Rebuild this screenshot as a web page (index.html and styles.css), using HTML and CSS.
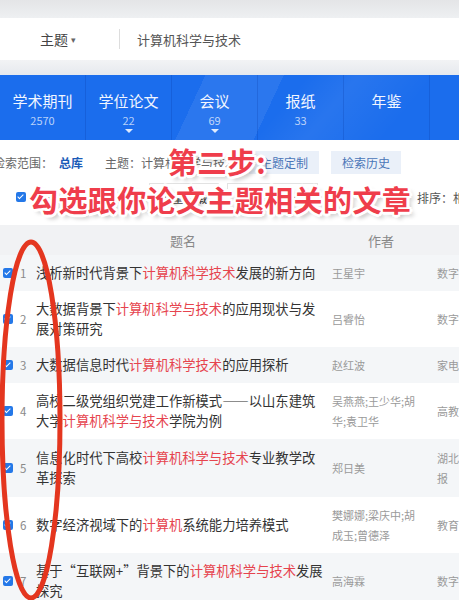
FILE: index.html
```html
<!DOCTYPE html>
<html lang="zh-CN">
  <head>
    <meta charset="UTF-8">
    <meta name="viewport" content="width=device-width, initial-scale=1.0">
    <title>计算机科学与技术 - 检索结果</title>
    <link rel="stylesheet" href="styles.css">
  </head>
  <body>

    <div class="top-strip"></div>

    <div class="search-bar">
      <div class="search-field">主题 <span class="caret">▾</span></div>
      <div class="search-divider"></div>
      <div class="search-query">计算机科学与技术</div>
    </div>

    <div class="strip-gap"></div>

    <div class="db-tabs">
      <div class="db-tab">
        <div class="db-name">学术期刊</div>
        <div class="db-count">2570</div>
      </div>
      <div class="db-tab">
        <div class="db-name">学位论文</div>
        <div class="db-count more">22</div>
      </div>
      <div class="db-tab active">
        <div class="db-name">会议</div>
        <div class="db-count more">69</div>
      </div>
      <div class="db-tab">
        <div class="db-name">报纸</div>
        <div class="db-count">33</div>
      </div>
      <div class="db-tab">
        <div class="db-name">年鉴</div>
        <div class="db-count">&nbsp;</div>
      </div>
      <div class="db-tab"></div>
    </div>

    <div class="filters">
      <div class="filter-row">
        <span class="scope-label">检索范围：</span>
        <span class="scope-value">总库</span>
        <span class="scope-label">主题：计算机科学与技术</span>
        <span class="pill">主题定制</span>
        <span class="pill">检索历史</span>
      </div>
      <div class="filter-row tools">
        <span class="chk"></span>
        <span class="tool-text">全选</span>
        <span class="tool-text">已选 12</span>
        <span class="tool-text">清除</span>
        <span class="tool-btn">批量下载</span>
        <span class="tool-btn">导出与分析 ▾</span>
        <span class="sort">排序：相关度</span>
      </div>
    </div>

    <div class="results">
      <div class="results-head">
        <div class="col-title">题名</div>
        <div class="col-author">作者</div>
      </div>

      <div class="result odd">
        <span class="chk"></span><span class="num">1</span>
        <div class="title">浅析新时代背景下<em>计算机科学技术</em>发展的新方向</div>
        <div class="author">王星宇</div>
        <div class="source">数字技术与应用</div>
      </div>
      <div class="result">
        <span class="chk"></span><span class="num">2</span>
        <div class="title">大数据背景下<em>计算机科学与技术</em>的应用现状与发展对策研究</div>
        <div class="author">吕睿怡</div>
        <div class="source">数字技术与应用</div>
      </div>
      <div class="result odd">
        <span class="chk"></span><span class="num">3</span>
        <div class="title">大数据信息时代<em>计算机科学技术</em>的应用探析</div>
        <div class="author">赵红波</div>
        <div class="source">家电维修</div>
      </div>
      <div class="result">
        <span class="chk"></span><span class="num">4</span>
        <div class="title">高校二级党组织党建工作新模式——以山东建筑大学<em>计算机科学与技术</em>学院为例</div>
        <div class="author">吴燕燕;王少华;胡华;袁卫华</div>
        <div class="source">高教学刊</div>
      </div>
      <div class="result odd tall">
        <span class="chk"></span><span class="num">5</span>
        <div class="title">信息化时代下高校<em>计算机科学与技术</em>专业教学改革探索</div>
        <div class="author">郑日美</div>
        <div class="source">湖北<br>报</div>
      </div>
      <div class="result">
        <span class="chk"></span><span class="num">6</span>
        <div class="title">数字经济视域下的<em>计算机</em>系统能力培养模式</div>
        <div class="author">樊娜娜;梁庆中;胡成玉;曾德泽</div>
        <div class="source">教育</div>
      </div>
      <div class="result odd">
        <span class="chk"></span><span class="num">7</span>
        <div class="title">基于“互联网+”背景下的<em>计算机科学与技术</em>发展探究</div>
        <div class="author">高海霖</div>
        <div class="source">数字</div>
      </div>
    </div>

    <!-- caption and marker drawn on top of the list -->
    <div class="caption">
      <div class="caption-step">第二步:</div>
      <div class="caption-line">勾选跟你论文主题相关的文章</div>
    </div>

    <svg class="marker" width="80" height="370" viewBox="0 0 80 370">
      <ellipse cx="31" cy="182" rx="29" ry="178" fill="none" stroke="#e4361f" stroke-width="5"/>
    </svg>

  </body>
</html>
```

FILE: styles.css
```css
html, body {
  margin: 0;
  padding: 0;
  box-sizing: border-box;
}
*, *:before, *:after {
  box-sizing: inherit;
}
body {
  position: relative;
  width: 459px;
  height: 600px;
  overflow: hidden;
  font-family: "Noto Sans CJK SC", "Noto Sans", sans-serif;
  color: #333;
  background-color: #fff;
}

/* search box */
.top-strip {
  height: 18px;
  background: linear-gradient(#e4e5e7, #eef0f2);
}
.search-bar {
  display: flex;
  align-items: center;
  height: 42px;
  background-color: #fff;
}
.search-field {
  width: 119px;
  padding-left: 40px;
  font-size: 14px;
  color: #444;
}
.caret {
  font-size: 9px;
  color: #666;
  vertical-align: 2px;
}
.search-divider {
  width: 1px;
  height: 20px;
  background-color: #ddd;
}
.search-query {
  padding-left: 17px;
  font-size: 13px;
  color: #555;
}
.strip-gap {
  height: 15px;
  background: linear-gradient(#f2f3f5, #e6e9ee);
}

/* database tabs */
.db-tabs {
  display: flex;
  height: 65px;
  background-color: #1b6ded;
  background-image:
    linear-gradient(115deg, rgba(255,255,255,0) 42%, rgba(255,255,255,0.07) 42%, rgba(255,255,255,0.07) 58%, rgba(255,255,255,0) 58%),
    linear-gradient(130deg, rgba(0,0,0,0) 60%, rgba(255,255,255,0.06) 70%, rgba(0,0,0,0) 85%);
}
.db-tab {
  position: relative;
  flex: 0 0 86px;
  display: flex;
  flex-direction: column;
  align-items: center;
  padding-top: 15px;
  border-right: 1px solid rgba(0,40,140,0.18);
}
.db-tab:last-child {
  flex: 1;
  border-right: none;
}
.db-name {
  font-size: 15px;
  line-height: 22px;
  color: #f2f6ff;
}
.db-count {
  font-size: 11px;
  line-height: 16px;
  color: rgba(255,255,255,0.7);
}
.db-count.more:after {
  content: '';
  position: absolute;
  left: 50%;
  bottom: 7px;
  margin-left: -4px;
  border: 4px solid transparent;
  border-top: 4px solid rgba(255,255,255,0.85);
  border-bottom: none;
}

/* filter rows */
.filters {
  padding-top: 8px;
  height: 85px;
}
.filter-row {
  display: flex;
  align-items: center;
  height: 28px;
  font-size: 12px;
  color: #666;
  white-space: nowrap;
}
.scope-label:first-child {
  margin-left: -7px;
}
.scope-value {
  margin: 0 22px 0 6px;
  color: #1b5cb8;
  font-weight: bold;
}
.pill {
  margin-left: 12px;
  padding: 3px 11px;
  background-color: #eaf0f9;
  color: #4a76b8;
}
.pill:nth-of-type(2) {
  margin-left: -40px;
}
.tools {
  margin-top: 6px;
  height: 30px;
  padding-left: 16px;
}
.tool-text {
  margin-left: 9px;
  color: #444;
}
.tool-btn {
  margin-left: 8px;
  padding: 5px 10px;
  border: 1px solid #e2e2e2;
  background-color: #fff;
  color: #444;
}
.tool-btn:first-of-type {
  margin-left: 22px;
}
.sort {
  margin-left: auto;
  margin-right: -30px;
  color: #555;
}

/* checkbox */
.chk {
  position: relative;
  flex: 0 0 10px;
  width: 10px;
  height: 10px;
  border-radius: 2px;
  background-color: #2478e8;
}
.chk:after {
  content: '';
  position: absolute;
  left: 3px;
  top: 1px;
  width: 3px;
  height: 6px;
  border: solid #fff;
  border-width: 0 1.5px 1.5px 0;
  transform: rotate(45deg);
}

/* result table */
.results-head {
  display: flex;
  align-items: center;
  height: 30px;
  background-color: #f1f2f4;
  font-size: 13px;
  color: #888;
}
.col-title {
  width: 335px;
  padding-left: 170px;
}
.col-author {
  width: 92px;
  text-align: center;
}
.result {
  display: flex;
  align-items: center;
  min-height: 36px;
  padding: 8px 0 8px 3px;
  background-color: #fff;
}
.result.odd {
  background-color: #f4f6f8;
}
.result.tall {
  min-height: 58px;
}
.result .num {
  flex: 0 0 14px;
  margin-left: 7px;
  font-size: 11.5px;
  color: #8a8a8a;
}
.title {
  flex: 0 0 292px;
  margin-left: 2px;
  font-size: 13.3px;
  line-height: 20px;
  color: #333;
}
.title em {
  font-style: normal;
  color: #e6444e;
}
.author {
  flex: 0 0 92px;
  margin-left: 4px;
  font-size: 11px;
  line-height: 20px;
  color: #9a9a9a;
}
.source {
  margin-left: 13px;
  font-size: 11px;
  line-height: 20px;
  color: #9a9a9a;
  white-space: nowrap;
}

/* caption over the list */
.caption {
  position: absolute;
  left: 29px;
  top: 142px;
  font-weight: bold;
  font-size: 29px;
  line-height: 38px;
  letter-spacing: 0.4px;
  color: #ef3d4b;
  text-shadow:
    2px 0 0 #fff, -2px 0 0 #fff, 0 2px 0 #fff, 0 -2px 0 #fff,
    2px 2px 0 #fff, -2px -2px 0 #fff, 2px -2px 0 #fff, -2px 2px 0 #fff,
    3px 0 0 #fff, -3px 0 0 #fff, 0 3px 0 #fff, 0 -3px 0 #fff,
    4px 4px 4px rgba(0,0,0,0.25);
}
.caption-step {
  padding-left: 139px;
}

.marker {
  position: absolute;
  left: 0;
  top: 238px;
}
```
